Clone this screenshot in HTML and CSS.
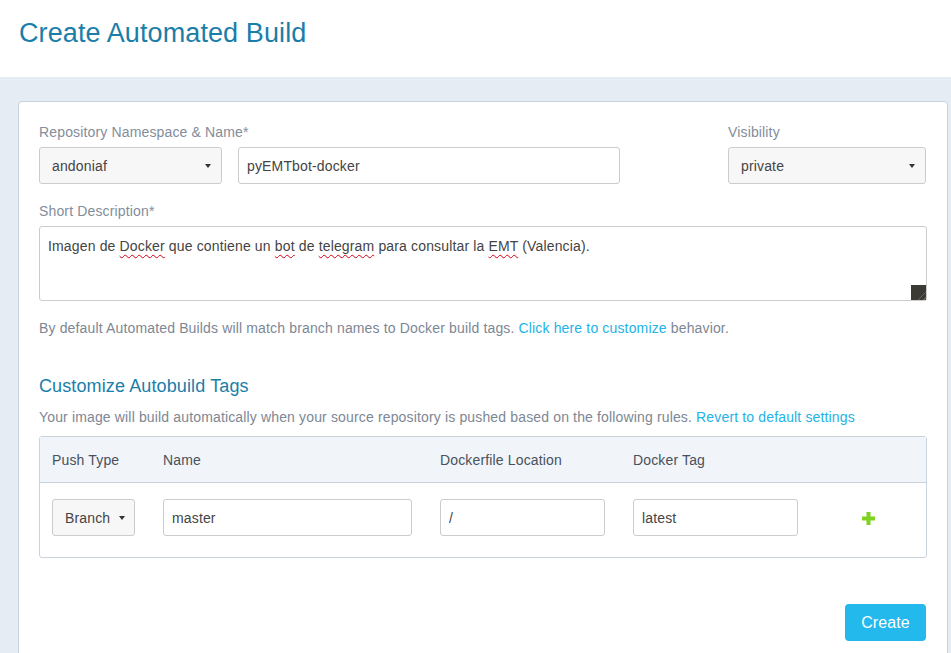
FILE: index.html
```html
<!DOCTYPE html>
<html>
<head>
<meta charset="utf-8">
<link rel="stylesheet" href="styles.css">
</head>
<body>
<header class="page-header">
  <h1 class="page-title">Create Automated Build</h1>
</header>
<main class="page-body">
  <section class="card">
    <div class="form-top">
      <label class="label label-name">Repository Namespace &amp; Name*</label>
      <label class="label label-vis">Visibility</label>
      <div class="select sel-ns">andoniaf<span class="caret"></span></div>
      <input class="input inp-name" type="text" value="pyEMTbot-docker">
      <div class="select sel-vis">private<span class="caret"></span></div>
    </div>

    <label class="label label-desc">Short Description*</label>
    <div class="textarea">Imagen de <span class="sp">Docker</span> que contiene un <span class="sp">bot</span> de <span class="sp">telegram</span> para consultar la <span class="sp">EMT</span> (Valencia).<span class="resize"></span></div>

    <p class="help">By default Automated Builds will match branch names to Docker build tags. <a class="link">Click here to customize</a> behavior.</p>

    <h2 class="section-title">Customize Autobuild Tags</h2>
    <p class="help help-tags">Your image will build automatically when your source repository is pushed based on the following rules. <a class="link">Revert to default settings</a></p>

    <div class="rules">
      <div class="rules-head">
        <div>Push Type</div>
        <div>Name</div>
        <div>Dockerfile Location</div>
        <div>Docker Tag</div>
        <div></div>
      </div>
      <div class="rules-row">
        <div><div class="select sel-branch">Branch<span class="caret"></span></div></div>
        <div><input class="input" type="text" value="master"></div>
        <div><input class="input" type="text" value="/"></div>
        <div><input class="input" type="text" value="latest"></div>
        <div class="add-cell">
          <svg class="plus" width="13" height="13" viewBox="0 0 13 13"><rect x="4.5" y="0" width="4" height="13" fill="#7ed321"/><rect x="0" y="4.5" width="13" height="4" fill="#7ed321"/></svg>
        </div>
      </div>
    </div>

    <div class="actions">
      <button class="btn-create">Create</button>
    </div>
  </section>
</main>
</body>
</html>
```
FILE: styles.css
```css
* { box-sizing: border-box; }
html, body { margin: 0; padding: 0; }
body {
  font-family: "Liberation Sans", Arial, sans-serif;
  font-size: 14px;
  line-height: 20px;
  letter-spacing: 0.15px;
  color: #555;
  background: #e5ecf4;
  width: 951px;
  height: 653px;
  overflow: hidden;
}
.page-header {
  background: #fff;
  height: 77px;
  padding: 17px 19px 0;
}
.page-title {
  margin: 0;
  font-size: 27px;
  line-height: 32px;
  letter-spacing: 0.1px;
  font-weight: normal;
  color: #1a7ea8;
}
.page-body {
  padding: 24px 0 0 18px;
}
.card {
  width: 930px;
  height: 600px;
  background: #fff;
  border: 1px solid #c6d1dd;
  border-radius: 4px 4px 0 0;
  padding: 20px 20px 0;
}
.form-top {
  display: grid;
  grid-template-columns: 183px 382px 76px 198px;
  column-gap: 16px;
  row-gap: 5px;
}
.label {
  display: block;
  color: #838d9b;
  font-size: 14px;
  line-height: 20px;
}
.label-name { grid-column: 1 / 3; }
.label-vis { grid-column: 4; }
.sel-vis { grid-column: 4; }
.select {
  position: relative;
  height: 37px;
  background: #f7f7f7;
  border: 1px solid #ccc;
  border-radius: 3px;
  padding: 7.5px 12px;
  color: #444;
  font-size: 14px;
  line-height: 20px;
}
.caret {
  position: absolute;
  right: 10px;
  top: 16px;
  width: 0;
  height: 0;
  border-left: 3.5px solid transparent;
  border-right: 3.5px solid transparent;
  border-top: 4px solid #333;
}
.input {
  display: block;
  width: 100%;
  height: 37px;
  border: 1px solid #ccc;
  border-radius: 3px;
  padding: 7px 8px;
  font-family: "Liberation Sans", Arial, sans-serif;
  font-size: 14px;
  line-height: 20px;
  letter-spacing: 0.15px;
  color: #444;
  background: #fff;
  outline: none;
}
.label-desc { margin-top: 17px; }
.textarea {
  position: relative;
  margin-top: 5px;
  height: 75px;
  border: 1px solid #ccc;
  border-radius: 3px;
  padding: 9px 8px;
  color: #444;
}
.sp {
  text-decoration: underline wavy #d0021b;
  text-decoration-thickness: 1px;
  text-underline-offset: 3px;
}
.resize {
  position: absolute;
  right: 0;
  bottom: 0;
  width: 15px;
  height: 15px;
  background:
    linear-gradient(135deg, #3b3a35 0 55%, transparent 55%),
    repeating-linear-gradient(135deg, #3b3a35 0 3px, #66655e 3px 4px);
}
.help {
  margin: 17px 0 0;
  color: #7d8794;
}
.link { color: #23b3e6; text-decoration: none; cursor: pointer; }
.section-title {
  margin: 36px 0 0;
  font-size: 18px;
  line-height: 24px;
  letter-spacing: 0.12px;
  font-weight: normal;
  color: #1a7ea8;
}
.help-tags { margin-top: 9px; }
.rules {
  margin-top: 9px;
  border: 1px solid #c9d3de;
  border-radius: 3px;
}
.rules-head, .rules-row {
  display: grid;
  grid-template-columns: 111px 277px 193px 193px 1fr;
  padding-left: 12px;
}
.rules-head {
  height: 46px;
  background: #f1f5f9;
  border-bottom: 1px solid #c9d3de;
  align-items: center;
  color: #48515c;
}
.rules-row {
  padding-top: 16px;
  padding-bottom: 21px;
  align-items: center;
}
.rules-row > div { padding-right: 28px; }
.sel-branch {
  width: 83px;
  padding-left: 12px;
}
.sel-branch .caret { right: 9px; }
.add-cell {
  padding-left: 36px;
  display: flex;
  align-items: center;
  height: 37px;
}
.plus { display: block; margin-top: 1px; }
.actions {
  display: flex;
  justify-content: flex-end;
  margin-top: 46px;
}
.btn-create {
  width: 81px;
  height: 37px;
  margin-right: 1px;
  background: #23b9ec;
  color: #fff;
  border: none;
  border-radius: 4px;
  font-family: "Liberation Sans", Arial, sans-serif;
  font-size: 16px;
  letter-spacing: 0.1px;
  padding: 0;
}
```
